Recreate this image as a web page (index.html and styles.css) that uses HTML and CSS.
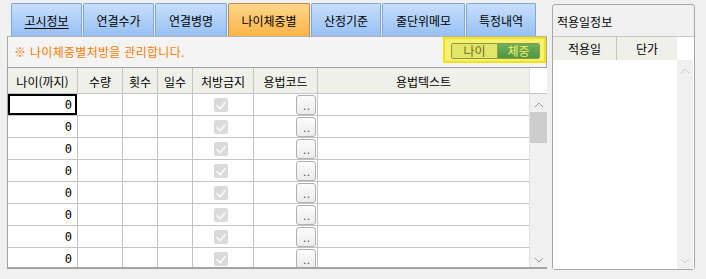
FILE: index.html
```html
<!DOCTYPE html>
<html lang="ko">
<head>
<meta charset="utf-8">
<link rel="stylesheet" href="styles.css">
</head>
<body>
<div class="app">
  <div class="left">
    <div class="tabs">
      <div class="tab w71"><span class="ul">고시정보</span></div>
      <div class="tab w71">연결수가</div>
      <div class="tab w72">연결병명</div>
      <div class="tab active w82">나이체중별</div>
      <div class="tab w70">산정기준</div>
      <div class="tab w83">줄단위메모</div>
      <div class="tab w70">특정내역</div>
    </div>
    <div class="panel">
      <div class="msgrow">
        <div class="msg">※ 나이체중별처방을 관리합니다.</div>
        <div class="toggle">
          <div class="pill">
            <span class="opt off">나이</span>
            <span class="opt on">체중</span>
          </div>
        </div>
      </div>
      <div class="grid">
        <div class="gtable">
          <div class="grow head">
            <div class="c c1">나이(까지)</div>
            <div class="c c2">수량</div>
            <div class="c c3">횟수</div>
            <div class="c c4">일수</div>
            <div class="c c5">처방금지</div>
            <div class="c c6">용법코드</div>
            <div class="c c7">용법텍스트</div>
          </div>
          <div class="grow"><div class="c c1 num focus">0</div><div class="c c2"></div><div class="c c3"></div><div class="c c4"></div><div class="c c5"><span class="chk"></span></div><div class="c c6"><span class="btn">. .</span></div><div class="c c7"></div></div>
          <div class="grow"><div class="c c1 num">0</div><div class="c c2"></div><div class="c c3"></div><div class="c c4"></div><div class="c c5"><span class="chk"></span></div><div class="c c6"><span class="btn">. .</span></div><div class="c c7"></div></div>
          <div class="grow"><div class="c c1 num">0</div><div class="c c2"></div><div class="c c3"></div><div class="c c4"></div><div class="c c5"><span class="chk"></span></div><div class="c c6"><span class="btn">. .</span></div><div class="c c7"></div></div>
          <div class="grow"><div class="c c1 num">0</div><div class="c c2"></div><div class="c c3"></div><div class="c c4"></div><div class="c c5"><span class="chk"></span></div><div class="c c6"><span class="btn">. .</span></div><div class="c c7"></div></div>
          <div class="grow"><div class="c c1 num">0</div><div class="c c2"></div><div class="c c3"></div><div class="c c4"></div><div class="c c5"><span class="chk"></span></div><div class="c c6"><span class="btn">. .</span></div><div class="c c7"></div></div>
          <div class="grow"><div class="c c1 num">0</div><div class="c c2"></div><div class="c c3"></div><div class="c c4"></div><div class="c c5"><span class="chk"></span></div><div class="c c6"><span class="btn">. .</span></div><div class="c c7"></div></div>
          <div class="grow"><div class="c c1 num">0</div><div class="c c2"></div><div class="c c3"></div><div class="c c4"></div><div class="c c5"><span class="chk"></span></div><div class="c c6"><span class="btn">. .</span></div><div class="c c7"></div></div>
          <div class="grow last"><div class="c c1 num">0</div><div class="c c2"></div><div class="c c3"></div><div class="c c4"></div><div class="c c5"><span class="chk"></span></div><div class="c c6"><span class="btn">. .</span></div><div class="c c7"></div></div>
        </div>
        <div class="vscroll">
          <div class="vhead"></div>
          <div class="track">
            <svg class="arrow" width="10" height="6" viewBox="0 0 10 6"><path d="M1 5 L5 1 L9 5" fill="none" stroke="#9aa0a8" stroke-width="1"/></svg>
            <div class="thumb"></div>
            <div class="spacer"></div>
            <svg class="arrow" width="10" height="6" viewBox="0 0 10 6"><path d="M1 1 L5 5 L9 1" fill="none" stroke="#9aa0a8" stroke-width="1"/></svg>
          </div>
        </div>
      </div>
    </div>
  </div>
  <div class="side">
    <div class="sidehead">적용일정보</div>
    <div class="sidebody">
      <div class="stable">
        <div class="srow head">
          <div class="sc s1">적용일</div>
          <div class="sc s2">단가</div>
        </div>
      </div>
      <div class="vscroll small">
        <div class="vhead white"></div>
        <div class="track">
          <svg class="arrow" width="10" height="6" viewBox="0 0 10 6"><path d="M1 5 L5 1 L9 5" fill="none" stroke="#c8ccd0" stroke-width="1"/></svg>
          <div class="spacer"></div>
          <svg class="arrow" width="10" height="6" viewBox="0 0 10 6"><path d="M1 1 L5 5 L9 1" fill="none" stroke="#c8ccd0" stroke-width="1"/></svg>
        </div>
      </div>
    </div>
  </div>
</div>
</body>
</html>
```

FILE: styles.css
```css
* { box-sizing: border-box; }
html, body {
  margin: 0;
  padding: 0;
  width: 706px;
  height: 279px;
  overflow: hidden;
  background: #f0f0f0;
  font-family: "Noto Sans CJK KR", "Noto Sans", sans-serif;
  font-size: 12px;
  color: #000;
}
.app {
  display: flex;
  padding: 3px 0 0 7px;
  gap: 5px;
}
.left {
  width: 540px;
  display: flex;
  flex-direction: column;
}
.tabs {
  display: flex;
  gap: 1px;
  padding-left: 4px;
  height: 33px;
}
.tab {
  height: 33px;
  border: 1px solid #7ea6dc;
  border-bottom: none;
  border-radius: 2px 2px 0 0;
  background: linear-gradient(#c7dffd, #96c0f2);
  display: flex;
  align-items: center;
  justify-content: center;
  line-height: 1;
  padding-top: 1px;
}
.tab.active {
  background: linear-gradient(#ffd68a, #ffb448);
  border-color: #b88a50;
}
.ul { text-decoration: underline; text-underline-offset: 2px; }
.w70 { width: 70px; }
.w71 { width: 71px; }
.w72 { width: 72px; }
.w82 { width: 82px; }
.w83 { width: 83px; }
.panel {
  height: 233px;
  background: #f4f4f4;
  border-top: 1px solid #b4b4b4;
  border-left: 1px solid #a8a8a8;
  border-right: 1px solid #a8a8a8;
  display: flex;
  flex-direction: column;
}
.msgrow {
  height: 30px;
  display: flex;
  justify-content: space-between;
  align-items: flex-start;
}
.msg {
  color: #ff7a00;
  padding: 6px 0 0 6px;
  letter-spacing: 0.3px;
}
.toggle {
  width: 103px;
  height: 26px;
  border: 2px solid #f2e21a;
  background: #f8f070;
  padding: 4px 4px 0 6px;
}
.pill {
  display: flex;
  height: 16px;
  border: 1px solid #8a9a40;
  border-radius: 2px;
  overflow: hidden;
}
.opt {
  display: flex;
  align-items: center;
  justify-content: center;
  font-size: 12px;
  line-height: 1;
}
.opt.off {
  width: 46px;
  background: #e2e66a;
  color: #6a6a20;
  border-right: 1px solid #9aa040;
}
.opt.on {
  flex: 1;
  background: linear-gradient(#6cae5c, #4e9644);
  color: #f8f060;
}
.grid {
  flex: 1;
  display: flex;
  background: #fff;
  border-top: 1px solid #a0a0a0;
  border-bottom: 2px solid #a4a4a4;
  margin-left: -1px;
  margin-right: -1px;
  border-left: 1px solid #a0a0a0;
  overflow: hidden;
}
.gtable {
  width: 521px;
  display: flex;
  flex-direction: column;
}
.grow {
  display: flex;
  height: 22px;
  flex: none;
  border-bottom: 1px solid #c4c4c4;
}
.grow.head {
  height: 26px;
  background: #f0f0ea;
  border-bottom: 1px solid #c4c4c4;
}
.grow.last { border-bottom: none; }
.c {
  border-right: 1px solid #c4c4c4;
  display: flex;
  align-items: center;
  justify-content: center;
  height: 100%;
  position: relative;
}
.head .c { padding-top: 1px; }
.c1 { width: 70px; }
.c2 { width: 45px; }
.c3 { width: 35px; }
.c4 { width: 35px; }
.c5 { width: 61px; }
.c6 { width: 64px; justify-content: flex-end; padding-right: 1px; }
.head .c6 { justify-content: center; padding-right: 0; }
.c7 { width: 211px; border-right: none; }
.num {
  justify-content: flex-end;
  padding-right: 5px;
  font-family: "DejaVu Sans Mono", monospace;
  font-size: 12px;
}
.focus {
  box-shadow: inset 0 0 0 2px #000;
  border-right-color: transparent;
}
.chk {
  width: 14px;
  height: 14px;
  border-radius: 2px;
  background: #dadada;
  position: relative;
  margin-left: -5px;
}
.chk::after {
  content: "";
  position: absolute;
  left: 4px;
  top: 2px;
  width: 4px;
  height: 7px;
  border-right: 2px solid #f4f4f4;
  border-bottom: 2px solid #f4f4f4;
  transform: rotate(40deg);
}
.btn {
  width: 20px;
  height: 20px;
  border: 1px solid #b0b0b0;
  border-radius: 3px;
  background: linear-gradient(#fcfcfc, #ececec);
  font-size: 10px;
  color: #405070;
  display: flex;
  align-items: flex-end;
  justify-content: center;
  line-height: 1;
  padding-bottom: 3px;
  letter-spacing: -1px;
}
.vscroll {
  width: 18px;
  display: flex;
  flex-direction: column;
  border-left: 1px solid #e0e0e0;
}
.vhead {
  height: 26px;
  background: #fff;
  border-bottom: 1px solid #c4c4c4;
}
.track {
  flex: 1;
  background: #f0f0f0;
  display: flex;
  flex-direction: column;
  align-items: center;
  padding: 8px 0 4px;
}
.arrow { flex: none; }
.thumb {
  width: 17px;
  height: 31px;
  background: #cdcdcd;
  margin-top: 4px;
}
.spacer { flex: 1; }
.side {
  width: 143px;
  height: 266px;
  margin-top: 1px;
  border: 1px solid #a8a8a8;
  border-radius: 3px;
  background: #f0f0f0;
  display: flex;
  flex-direction: column;
}
.sidehead {
  height: 32px;
  display: flex;
  align-items: center;
  padding-left: 4px;
  padding-top: 1px;
  border-bottom: 1px solid #c8c8c8;
}
.sidebody {
  flex: 1;
  display: flex;
  background: #fff;
}
.stable {
  width: 124px;
}
.srow {
  display: flex;
  height: 23px;
}
.srow.head {
  background: #f0f0ea;
}
.sc {
  display: flex;
  align-items: center;
  justify-content: center;
  border-right: 1px solid #c4c4c4;
}
.s1 { width: 64px; }
.s2 { width: 60px; border-right: none; }
.vscroll.small {
  width: 16px;
  border-left: none;
}
.vhead.white {
  height: 23px;
  border-bottom: none;
}
.vscroll.small .track {
  padding: 8px 0 5px;
}
```
